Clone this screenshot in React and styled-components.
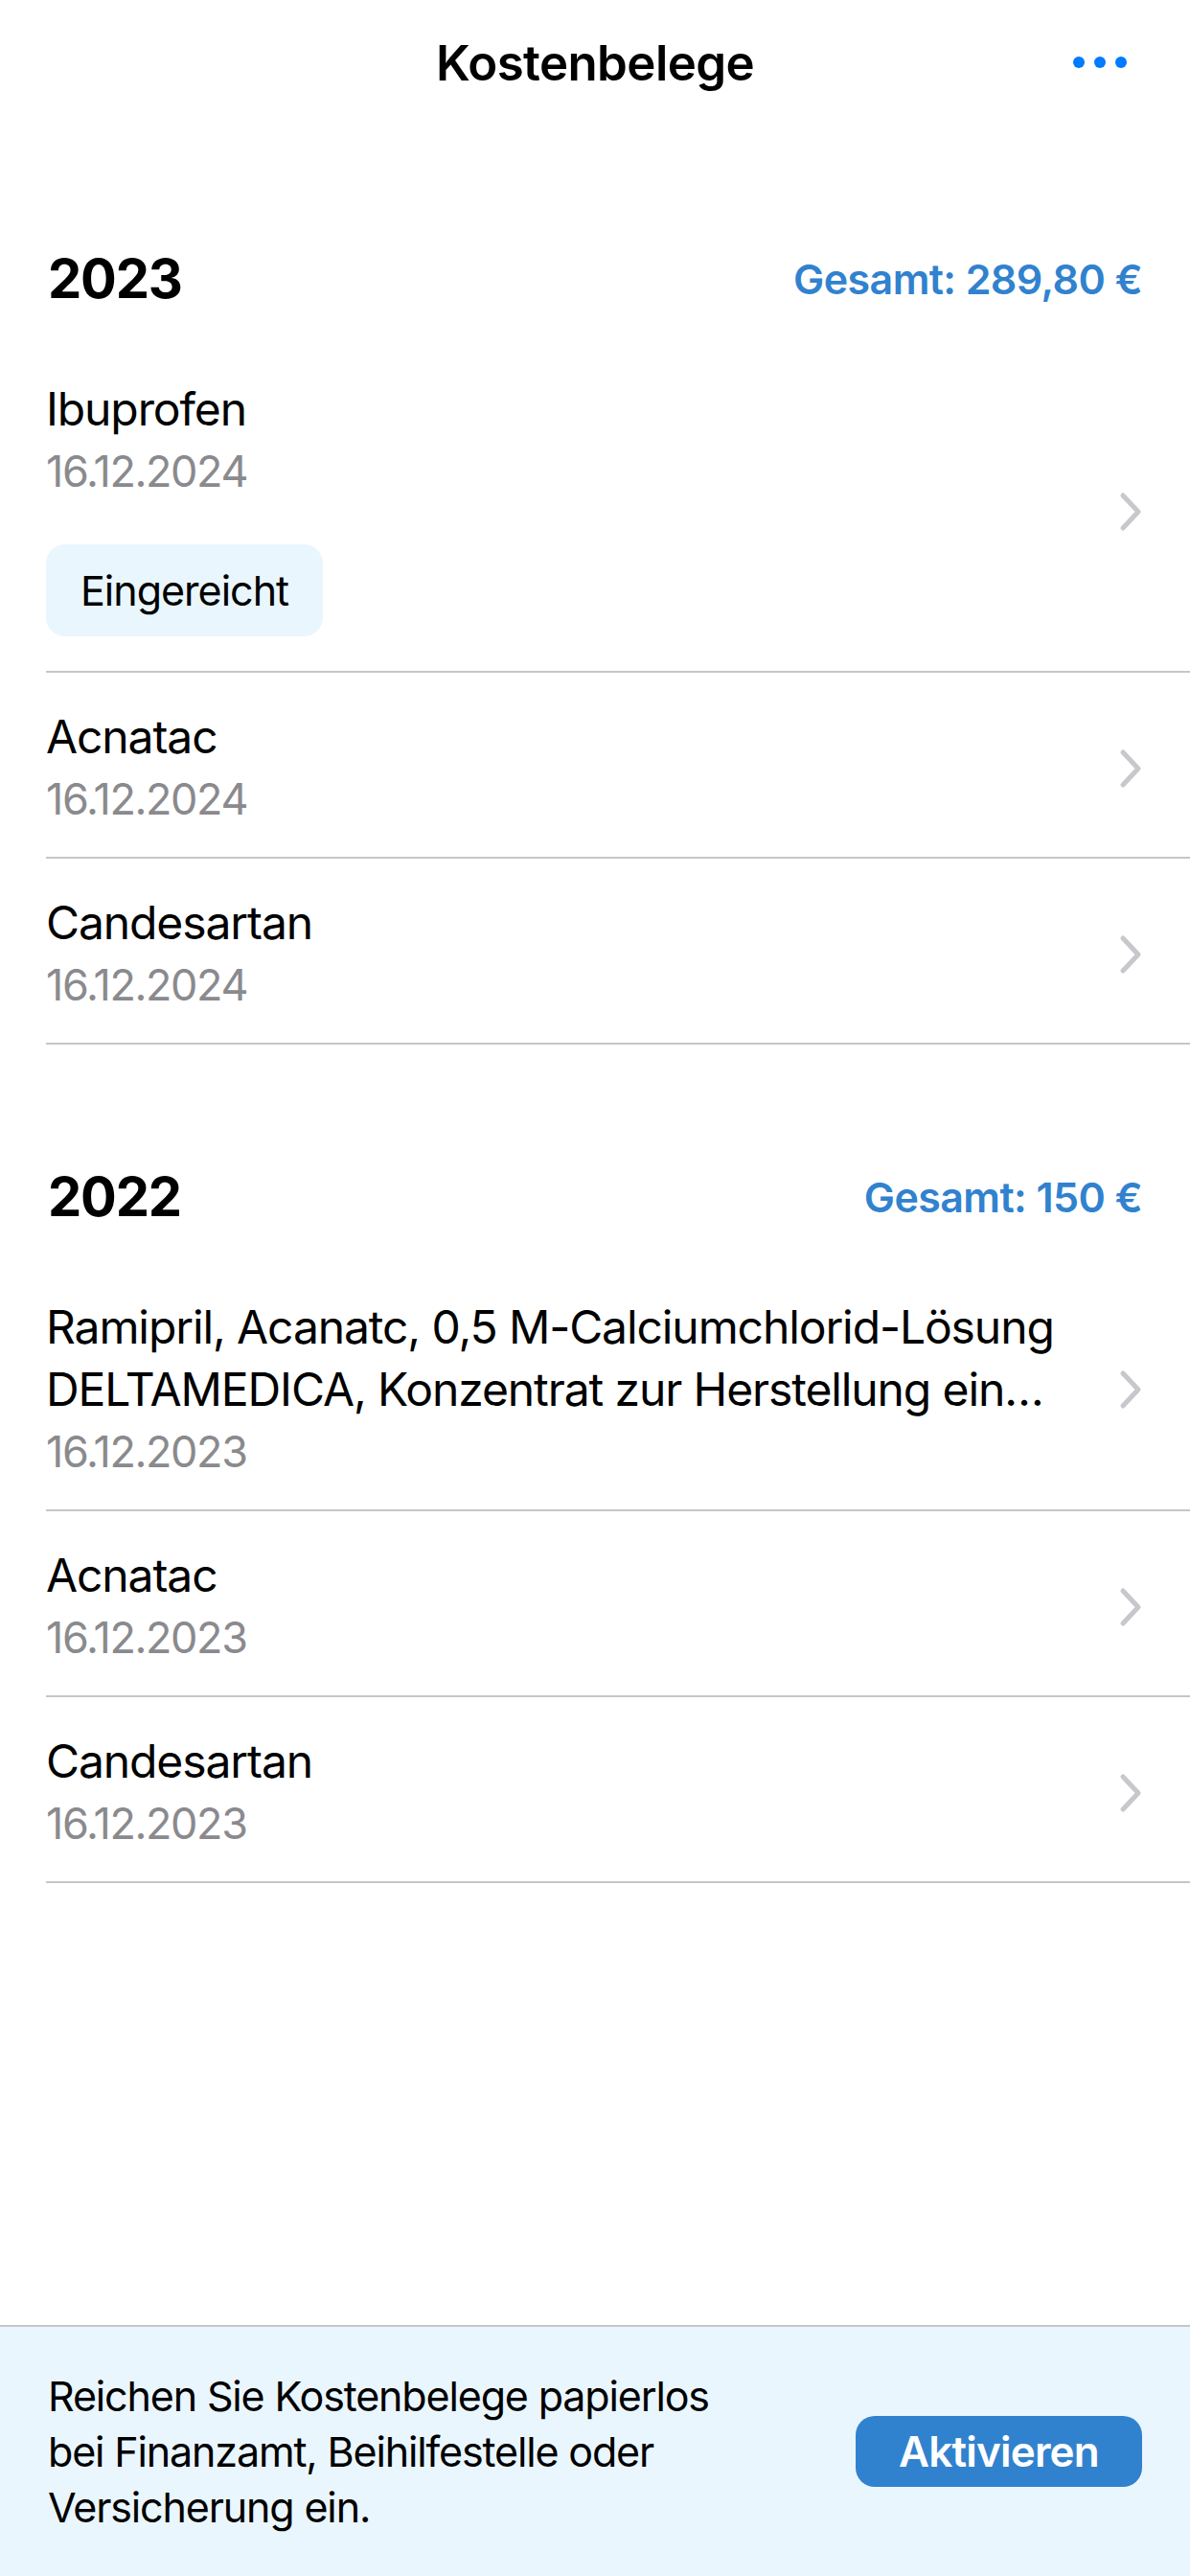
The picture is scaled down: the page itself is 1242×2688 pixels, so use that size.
import React from "react";
import styled, { createGlobalStyle } from "styled-components";

const Global = createGlobalStyle`
  html, body { margin: 0; padding: 0; background: #ffffff; }
  body { font-family: Inter, "Noto Sans", sans-serif; -webkit-font-smoothing: antialiased; }
  * { box-sizing: border-box; }
`;

const Page = styled.div`
  display: flex;
  flex-direction: column;
  width: 1242px;
  height: 2688px;
  background: #ffffff;
  color: #000000;
`;

const NavBar = styled.header`
  display: grid;
  grid-template-columns: 1fr auto 1fr;
  align-items: center;
  height: 130px;
  padding: 0 50px;
`;

const NavTitle = styled.h1`
  grid-column: 2;
  margin: 0;
  font-size: 51px;
  font-weight: 600;
  letter-spacing: -0.6px;
`;

const MoreButton = styled.button`
  justify-self: end;
  display: flex;
  gap: 10px;
  border: 0;
  background: none;
  padding: 0;
  margin-right: 16px;
`;

const Dot = styled.span`
  width: 12px;
  height: 12px;
  border-radius: 50%;
  background: #007aff;
`;

const Content = styled.main`
  flex: 1;
  display: flex;
  flex-direction: column;
  gap: 124px;
  padding-top: 126px;
`;

const Section = styled.section`
  display: flex;
  flex-direction: column;
`;

const SectionHeader = styled.div`
  display: flex;
  justify-content: space-between;
  align-items: center;
  height: 70px;
  padding: 0 50px;
  margin-bottom: 34px;
`;

const Year = styled.h2`
  margin: 0;
  font-size: 56px;
  font-weight: 700;
  letter-spacing: -1.2px;
`;

const Total = styled.span`
  font-size: 43px;
  font-weight: 600;
  color: #3182ce;
  letter-spacing: -0.6px;
`;

const List = styled.ul`
  list-style: none;
  margin: 0;
  padding: 0 0 0 48px;
`;

const Row = styled.li`
  display: flex;
  align-items: center;
  gap: 60px;
  padding: 34px 50px 27px 0;
  border-bottom: 2px solid #c6c6c8;
`;

const RowBody = styled.div`
  flex: 1;
  min-width: 0;
  display: flex;
  flex-direction: column;
`;

const RowTitle = styled.div`
  font-size: 48px;
  line-height: 65px;
  letter-spacing: -1.1px;
  display: -webkit-box;
  -webkit-line-clamp: 2;
  -webkit-box-orient: vertical;
  overflow: hidden;
`;

const RowDate = styled.div`
  font-size: 45px;
  line-height: 66px;
  color: #8a8a8e;
  letter-spacing: -1.4px;
`;

const Badge = styled.span`
  align-self: flex-start;
  margin-top: 43px;
  margin-bottom: 9px;
  display: inline-flex;
  align-items: center;
  height: 96px;
  padding: 0 36px;
  border-radius: 20px;
  background: #eaf6fe;
  font-size: 43px;
  letter-spacing: -1px;
`;

const Chevron = styled.svg`
  flex: none;
  width: 24px;
  height: 42px;
`;

const Banner = styled.footer`
  display: flex;
  align-items: center;
  justify-content: space-between;
  gap: 40px;
  height: 262px;
  padding: 0 50px;
  background: #eaf6fe;
  border-top: 2px solid #c6c6c8;
`;

const BannerText = styled.p`
  margin: 0;
  font-size: 43px;
  line-height: 58px;
  letter-spacing: -1.15px;
  max-width: 720px;
`;

const ActionButton = styled.button`
  flex: none;
  width: 299px;
  height: 74px;
  border: 0;
  border-radius: 20px;
  background: #3182ce;
  color: #ffffff;
  font-family: inherit;
  font-size: 44px;
  font-weight: 600;
  letter-spacing: -0.8px;
`;

const sections = [
  {
    year: "2023",
    total: "Gesamt: 289,80 €",
    items: [
      { title: "Ibuprofen", date: "16.12.2024", badge: "Eingereicht" },
      { title: "Acnatac", date: "16.12.2024" },
      { title: "Candesartan", date: "16.12.2024" },
    ],
  },
  {
    year: "2022",
    total: "Gesamt: 150 €",
    items: [
      {
        title:
          "Ramipril, Acanatc, 0,5 M-Calciumchlorid-Lösung DELTAMEDICA, Konzentrat zur Herstellung einer Infusionslösung",
        date: "16.12.2023",
      },
      { title: "Acnatac", date: "16.12.2023" },
      { title: "Candesartan", date: "16.12.2023" },
    ],
  },
];

const ChevronIcon = () => (
  <Chevron viewBox="0 0 24 42" fill="none">
    <path
      d="M4 4 L20 21 L4 38"
      stroke="#c7c7cc"
      strokeWidth="5"
      strokeLinecap="round"
      strokeLinejoin="round"
    />
  </Chevron>
);

export default function App() {
  return (
    <>
      <Global />
      <Page>
        <NavBar>
          <NavTitle>Kostenbelege</NavTitle>
          <MoreButton aria-label="Mehr">
            <Dot />
            <Dot />
            <Dot />
          </MoreButton>
        </NavBar>
        <Content>
          {sections.map((s) => (
            <Section key={s.year}>
              <SectionHeader>
                <Year>{s.year}</Year>
                <Total>{s.total}</Total>
              </SectionHeader>
              <List>
                {s.items.map((it, i) => (
                  <Row key={i}>
                    <RowBody>
                      <RowTitle>{it.title}</RowTitle>
                      <RowDate>{it.date}</RowDate>
                      {it.badge && <Badge>{it.badge}</Badge>}
                    </RowBody>
                    <ChevronIcon />
                  </Row>
                ))}
              </List>
            </Section>
          ))}
        </Content>
        <Banner>
          <BannerText>
            Reichen Sie Kostenbelege papierlos bei Finanzamt, Beihilfestelle oder
            Versicherung ein.
          </BannerText>
          <ActionButton>Aktivieren</ActionButton>
        </Banner>
      </Page>
    </>
  );
}
